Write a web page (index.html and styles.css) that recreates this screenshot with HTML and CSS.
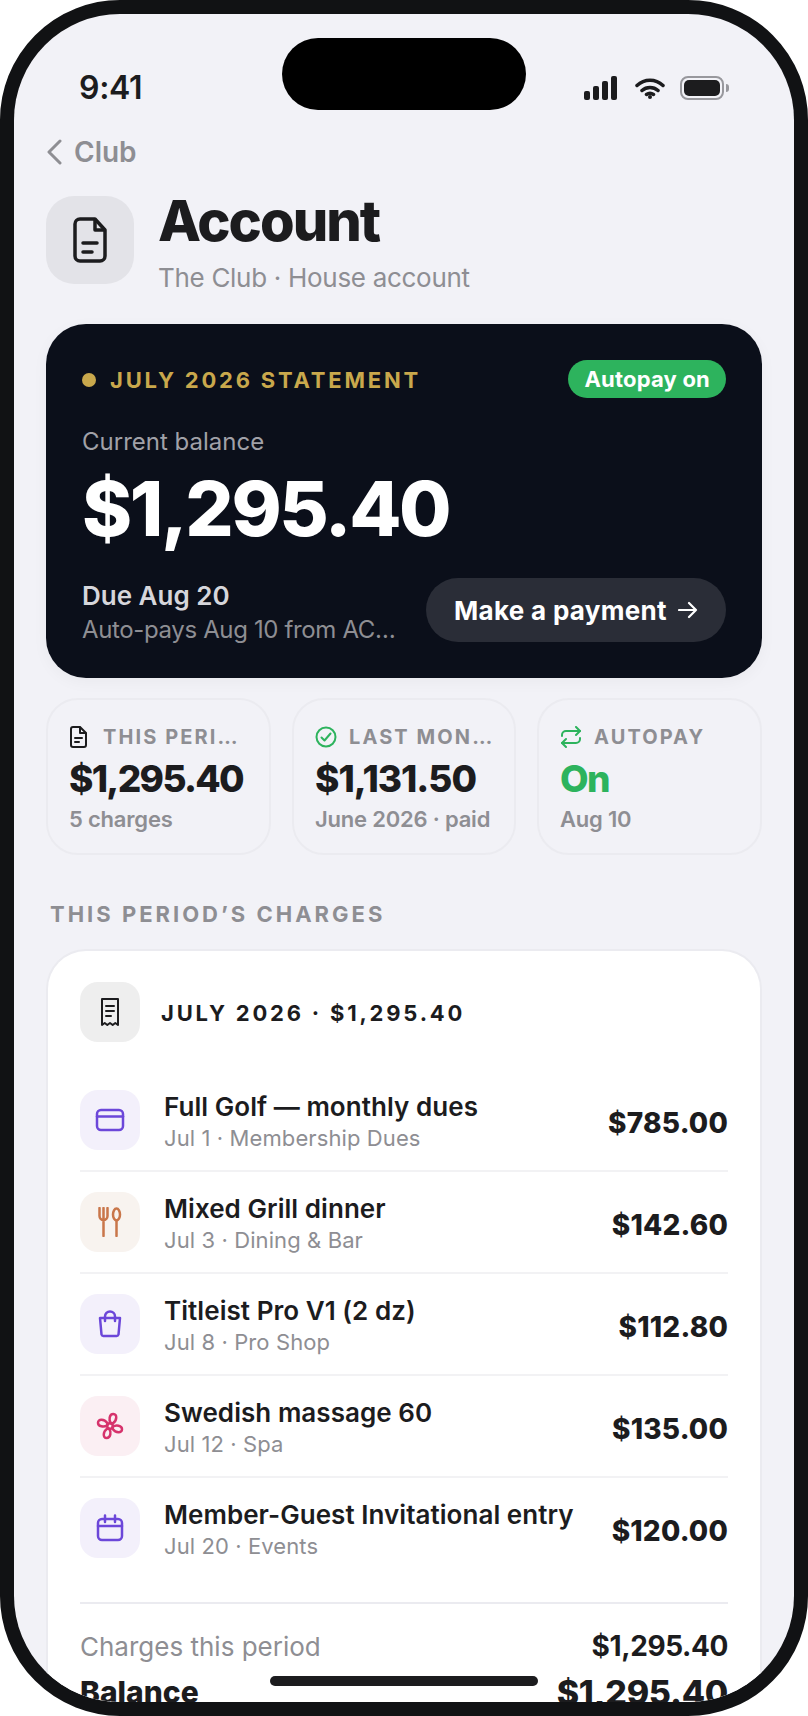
FILE: index.html
```html
<!DOCTYPE html>
<html lang="en">
<head>
    <meta charset="UTF-8">
    <meta name="viewport" content="width=device-width, initial-scale=1.0">
    <title>Account</title>
    <link rel="stylesheet" href="styles.css">
</head>
<body>
    <div class="phone">
        <div class="screen">
            <div class="island"></div>

            <div class="status">
                <span class="time">9:41</span>
                <div class="status-icons">
                    <svg class="signal" width="33" height="24" viewBox="0 0 33 24"><rect x="0" y="15" width="6" height="9" rx="2"/><rect x="9" y="10" width="6" height="14" rx="2"/><rect x="18" y="5" width="6" height="19" rx="2"/><rect x="27" y="0" width="6" height="24" rx="2"/></svg>
                    <svg class="wifi" width="30" height="22" viewBox="0 0 30 22"><path d="M2 8.500C9.500 1.500 20.500 1.500 28 8.500M7 13.500C11.500 9.500 18.500 9.500 23 13.500M11.500 17.500C13.500 16 16.500 16 18.500 17.500" /><circle cx="15" cy="20" r="2"/></svg>
                    <div class="battery"><div class="battery-fill"></div></div>
                    <div class="battery-cap"></div>
                </div>
            </div>

            <div class="content">
                <div class="back">
                    <svg width="16" height="26" viewBox="0 0 16 26"><path d="M14 2L3 13l11 11"/></svg>
                    <span>Club</span>
                </div>

                <div class="page-head">
                    <div class="head-tile">
                        <svg width="34" height="46" viewBox="0 0 34 46"><path d="M7 2h15l10 11v26a5 5 0 0 1-5 5H7a5 5 0 0 1-5-5V7a5 5 0 0 1 5-5z"/><path d="M22 3v10h9"/><path d="M10 26h14M10 35h9"/></svg>
                    </div>
                    <div class="head-text">
                        <h1>Account</h1>
                        <p>The Club · House account</p>
                    </div>
                </div>

                <div class="hero">
                    <div class="hero-top">
                        <div class="hero-label"><span class="dot"></span>JULY 2026 STATEMENT</div>
                        <span class="pill">Autopay on</span>
                    </div>
                    <div class="hero-caption">Current balance</div>
                    <div class="hero-amount">$1,295.40</div>
                    <div class="hero-bottom">
                        <div class="hero-due">
                            <div class="due-date">Due Aug 20</div>
                            <div class="due-note">Auto-pays Aug 10 from ACH ••4821</div>
                        </div>
                        <div class="pay-btn">
                            <span>Make a payment</span>
                            <svg width="20" height="20" viewBox="0 0 20 20"><path d="M1 10h17M11 3l7 7-7 7"/></svg>
                        </div>
                    </div>
                </div>

                <div class="stats">
                    <div class="stat">
                        <div class="stat-label">
                            <svg class="ico-dark" width="22" height="22" viewBox="0 0 22 22"><path d="M4 1h7l6 6v12a2 2 0 0 1-2 2H4a2 2 0 0 1-2-2V3a2 2 0 0 1 2-2z"/><path d="M11 1.500V7h5.500"/><path d="M6 12h7M6 16h4"/></svg>
                            <span>THIS PERIOD</span>
                        </div>
                        <div class="stat-value">$1,295.40</div>
                        <div class="stat-sub">5 charges</div>
                    </div>
                    <div class="stat">
                        <div class="stat-label">
                            <svg class="ico-green" width="22" height="22" viewBox="0 0 22 22"><circle cx="11" cy="11" r="9.500"/><path d="M6.500 11.500l3 3 6-7"/></svg>
                            <span>LAST MONTH</span>
                        </div>
                        <div class="stat-value loose">$1,131.50</div>
                        <div class="stat-sub">June 2026 · paid</div>
                    </div>
                    <div class="stat">
                        <div class="stat-label">
                            <svg class="ico-green" width="22" height="22" viewBox="0 0 22 22"><path d="M16 1l4 4-4 4"/><path d="M2 10V9a4 4 0 0 1 4-4h14"/><path d="M6 21l-4-4 4-4"/><path d="M20 12v1a4 4 0 0 1-4 4H2"/></svg>
                            <span>AUTOPAY</span>
                        </div>
                        <div class="stat-value on">On</div>
                        <div class="stat-sub">Aug 10</div>
                    </div>
                </div>

                <div class="section-title">THIS PERIOD’S CHARGES</div>

                <div class="charges">
                    <div class="charges-head">
                        <div class="receipt-tile">
                            <svg width="20" height="30" viewBox="0 0 20 30"><path d="M2 2h16v26l-2.700-2-2.600 2-2.700-2-2.700 2-2.600-2L2 28z"/><path d="M6 9h8M6 14h8M6 19h5"/></svg>
                        </div>
                        <span>JULY 2026 · $1,295.40</span>
                    </div>

                    <div class="row">
                        <div class="tile tile-purple">
                            <svg width="30" height="24" viewBox="0 0 30 24"><rect x="2" y="2" width="26" height="20" rx="4"/><path d="M2 8.500h26"/></svg>
                        </div>
                        <div class="row-text">
                            <div class="row-title">Full Golf — monthly dues</div>
                            <div class="row-sub">Jul 1 · Membership Dues</div>
                        </div>
                        <div class="row-amount">$785.00</div>
                    </div>
                    <div class="row">
                        <div class="tile tile-orange">
                            <svg width="24" height="30" viewBox="0 0 24 30"><path d="M1.500 1v8a4 4 0 0 0 8 0V1M5.500 1v28"/><ellipse cx="18.500" cy="7.500" rx="3.500" ry="6"/><path d="M18.500 13.500V29"/></svg>
                        </div>
                        <div class="row-text">
                            <div class="row-title">Mixed Grill dinner</div>
                            <div class="row-sub">Jul 3 · Dining &amp; Bar</div>
                        </div>
                        <div class="row-amount">$142.60</div>
                    </div>
                    <div class="row">
                        <div class="tile tile-purple">
                            <svg width="24" height="28" viewBox="0 0 24 28"><path d="M2 8h20l-1.500 16.500a2 2 0 0 1-2 1.500h-13a2 2 0 0 1-2-1.500z"/><path d="M7 11V6.500a5 5 0 0 1 10 0V11"/></svg>
                        </div>
                        <div class="row-text">
                            <div class="row-title">Titleist Pro V1 (2 dz)</div>
                            <div class="row-sub">Jul 8 · Pro Shop</div>
                        </div>
                        <div class="row-amount">$112.80</div>
                    </div>
                    <div class="row">
                        <div class="tile tile-pink">
                            <svg width="28" height="28" viewBox="0 0 28 28"><circle cx="14" cy="14" r="2.800"/><path d="M14.800 11.300c-2.300-3.300-1.500-9.300 2.500-9.300c4.200 0 3.700 6.400-.3 9.300z"/><path d="M16.700 14.800c3.300-2.300 9.300-1.500 9.300 2.500c0 4.200-6.400 3.700-9.300-.3z"/><path d="M13.200 16.700c2.300 3.300 1.500 9.300-2.500 9.300c-4.200 0-3.700-6.400.3-9.300z"/><path d="M11.300 13.200c-3.300 2.300-9.300 1.500-9.300-2.500c0-4.200 6.400-3.700 9.300.3z"/></svg>
                        </div>
                        <div class="row-text">
                            <div class="row-title">Swedish massage 60</div>
                            <div class="row-sub">Jul 12 · Spa</div>
                        </div>
                        <div class="row-amount">$135.00</div>
                    </div>
                    <div class="row">
                        <div class="tile tile-purple">
                            <svg width="28" height="28" viewBox="0 0 28 28"><rect x="2" y="5" width="24" height="21" rx="4"/><path d="M2 12h24M9 1.500V8M19 1.500V8"/></svg>
                        </div>
                        <div class="row-text">
                            <div class="row-title">Member-Guest Invitational entry</div>
                            <div class="row-sub">Jul 20 · Events</div>
                        </div>
                        <div class="row-amount">$120.00</div>
                    </div>

                    <div class="summary">
                        <div class="summary-line">
                            <span class="summary-name">Charges this period</span>
                            <span class="summary-value">$1,295.40</span>
                        </div>
                        <div class="summary-total">
                            <span>Balance</span>
                            <span class="total-value">$1,295.40</span>
                        </div>
                    </div>
                </div>
            </div>

            <div class="home-bar"></div>
        </div>
    </div>
</body>
</html>
```

FILE: styles.css
```css
* { box-sizing: border-box; }
html, body { margin: 0; padding: 0; background: #fff; }
body { font-family: Inter, "Liberation Sans", sans-serif; color: #1c1c1e; }
svg { display: block; flex-shrink: 0; fill: none; stroke-linecap: round; stroke-linejoin: round; }

.phone { width: 808px; height: 1716px; border: 14px solid #111214; border-radius: 120px; background: #111214; }
.screen { position: relative; width: 780px; height: 1688px; border-radius: 106px; background: #f2f2f7; overflow: hidden; }
.island { position: absolute; top: 24px; left: 268px; width: 244px; height: 72px; border-radius: 36px; background: #000; }
.home-bar { position: absolute; bottom: 16px; left: 256px; width: 268px; height: 10px; border-radius: 5px; background: #1c1c1e; }

.status { display: flex; justify-content: space-between; align-items: center; height: 92px; padding: 56px 65px 0 65px; }
.time { font-size: 32px; line-height: 36px; font-weight: 600; letter-spacing: -0.3px; }
.status-icons { display: flex; align-items: center; }
.signal { fill: #1c1c1e; margin-right: 18px; }
.wifi { stroke: #1c1c1e; stroke-width: 3.5px; margin-right: 15px; }
.wifi circle { fill: #1c1c1e; stroke: none; }
.battery { width: 44px; height: 24px; padding: 2px; border: 2px solid #98989d; border-radius: 8px; }
.battery-fill { height: 100%; border-radius: 5px; background: #1c1c1e; }
.battery-cap { width: 3px; height: 8px; margin-left: 2px; border-radius: 0 3px 3px 0; background: #98989d; }

.content { padding: 0 32px; }

.back { display: flex; align-items: center; gap: 12px; height: 36px; margin-top: 28px; font-size: 28px; font-weight: 600; color: #8e8e93; }
.back svg { stroke: #8e8e93; stroke-width: 3px; }

.page-head { display: flex; align-items: center; gap: 24px; height: 88px; margin-top: 26px; }
.head-tile { display: flex; align-items: center; justify-content: center; width: 88px; height: 88px; border-radius: 28px; background: #e3e3e8; }
.head-tile svg { stroke: #1c1c1e; stroke-width: 3.5px; }
.head-text { padding-top: 6px; }
.head-text h1 { margin: 0; font-size: 56px; line-height: 60px; font-weight: 800; letter-spacing: -2px; }
.head-text p { margin: 10px 0 0; font-size: 26px; line-height: 34px; letter-spacing: -0.3px; color: #8e8e93; }

.hero { height: 354px; margin-top: 40px; padding: 36px; border-radius: 40px; background: #0b0f1a; box-shadow: 0 4px 16px rgba(0, 0, 0, 0.04); }
.hero-top { display: flex; justify-content: space-between; align-items: center; height: 38px; }
.hero-label { display: flex; align-items: center; gap: 14px; padding-top: 2px; font-size: 22px; font-weight: 700; letter-spacing: 2.8px; color: #c9a84c; }
.dot { width: 14px; height: 14px; border-radius: 50%; background: #c9a84c; }
.pill { padding: 0 16px; font-size: 22px; line-height: 38px; font-weight: 700; letter-spacing: 0.2px; color: #fff; background: #2db35d; border-radius: 19px; }
.hero-caption { margin-top: 28px; font-size: 24px; line-height: 32px; color: #a1a1a8; }
.hero-amount { margin-top: 8px; font-size: 76px; line-height: 84px; font-weight: 800; letter-spacing: -2.4px; color: #fff; }
.hero-bottom { display: flex; align-items: center; gap: 30px; height: 64px; margin-top: 28px; }
.hero-due { flex: 1; min-width: 0; padding-top: 5px; }
.due-date { font-size: 26px; line-height: 34px; font-weight: 600; color: #d6d6db; }
.due-note { margin-top: 1px; font-size: 24px; line-height: 32px; letter-spacing: -0.36px; color: #8e8e93; white-space: nowrap; overflow: hidden; text-overflow: ellipsis; }
.pay-btn { display: flex; flex-shrink: 0; align-items: center; justify-content: center; gap: 11px; width: 300px; height: 64px; border-radius: 32px; background: #2a2d37; font-size: 26px; font-weight: 700; letter-spacing: 0.3px; color: #fff; }
.pay-btn svg { stroke: #fff; stroke-width: 2.2px; }

.stats { display: grid; grid-template-columns: 1fr 224px 1fr; gap: 21px; margin-top: 20px; }
.stat { min-width: 0; height: 157px; padding: 24px 20px 0 21px; border: 2px solid #ebebf0; border-radius: 32px; }
.stat-label { display: flex; align-items: center; gap: 12px; height: 26px; }
.stat-label span { min-width: 0; font-size: 20px; font-weight: 700; letter-spacing: 2.1px; color: #8e8e93; white-space: nowrap; overflow: hidden; text-overflow: ellipsis; }
.ico-dark { stroke: #1c1c1e; stroke-width: 2px; }
.ico-green { stroke: #2db35d; stroke-width: 2px; }
.stat-value { margin-top: 6px; font-size: 37px; line-height: 46px; font-weight: 800; letter-spacing: -1.7px; white-space: nowrap; }
.stat-value.loose { letter-spacing: -1px; }
.stat-value.on { color: #2db35d; }
.stat-sub { margin-top: 2px; font-size: 22px; line-height: 30px; font-weight: 600; letter-spacing: -0.2px; color: #8e8e93; white-space: nowrap; }

.section-title { margin-top: 44px; padding-left: 4px; font-size: 22px; line-height: 30px; font-weight: 700; letter-spacing: 3px; color: #8e8e93; }

.charges { margin-top: 20px; padding: 31px 32px 0; border: 2px solid #ebebf0; border-bottom: 0; border-radius: 40px 40px 0 0; background: #fff; }
.charges-head { display: flex; align-items: center; gap: 21px; height: 60px; margin-bottom: 28px; font-size: 22px; font-weight: 700; letter-spacing: 2.8px; }
.charges-head span { padding-top: 2px; }
.receipt-tile { display: flex; align-items: center; justify-content: center; width: 60px; height: 60px; border-radius: 18px; background: #eeeeee; }
.receipt-tile svg { stroke: #1c1c1e; stroke-width: 2px; }

.row { display: flex; align-items: center; gap: 24px; height: 102px; border-bottom: 2px solid #f2f2f4; }
.row:nth-last-child(2) { height: 100px; border-bottom: 0; }
.tile { display: flex; align-items: center; justify-content: center; flex-shrink: 0; width: 60px; height: 60px; border-radius: 18px; }
.tile svg { stroke-width: 2.5px; }
.tile-purple { background: #f3f0fb; }
.tile-purple svg { stroke: #6c47d9; }
.tile-orange { background: #f8f3ef; }
.tile-orange svg { stroke: #c9764a; }
.tile-pink { background: #fbeff3; }
.tile-pink svg { stroke: #d6336c; }
.row-text { flex: 1; min-width: 0; padding-top: 3px; }
.row-title { font-size: 26px; line-height: 34px; font-weight: 600; letter-spacing: 0.05px; white-space: nowrap; }
.row-sub { margin-top: -1px; font-size: 22px; line-height: 30px; letter-spacing: 0.1px; color: #8e8e93; }
.row-amount { padding-top: 6px; font-size: 28px; font-weight: 800; letter-spacing: 0.2px; white-space: nowrap; }

.summary { margin-top: 24px; padding-top: 24px; border-top: 2px solid #ebebf0; }
.summary-line, .summary-total { display: flex; justify-content: space-between; align-items: center; }
.summary-line { height: 36px; }
.summary-name { font-size: 26px; color: #8e8e93; }
.summary-value { font-size: 28px; font-weight: 700; letter-spacing: -0.4px; }
.summary-total { height: 44px; margin-top: 6px; font-size: 30px; font-weight: 800; }
.total-value { font-size: 34px; letter-spacing: -0.3px; }
```
